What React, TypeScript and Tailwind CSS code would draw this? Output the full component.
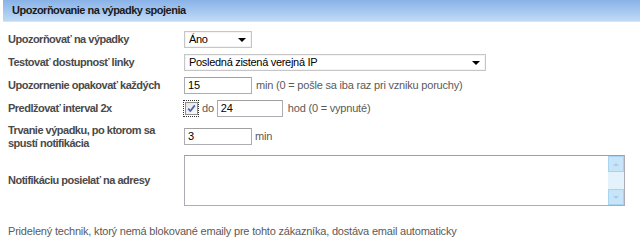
import { ReactNode } from 'react';

function Select({ value, width }: { value: string; width: string }) {
  return (
    <div
      className={`${width} h-[17px] flex items-center justify-between border border-[#c6c6c6] bg-white pl-[4px] pr-[5px] text-[11px] tracking-[-0.3px] text-black shadow-[inset_0_0_0_1px_#f4f4f4]`}
    >
      <span>{value}</span>
      <span className="w-0 h-0 border-l-[4px] border-r-[4px] border-t-[4px] border-l-transparent border-r-transparent border-t-black" />
    </div>
  );
}

function Input({ value, width }: { value: string; width: string }) {
  return (
    <div
      className={`${width} h-[17px] flex items-center border border-[#abadb3] border-t-[#a0a0a0] bg-white px-[3px] text-[11px] text-black`}
    >
      {value}
    </div>
  );
}

function Row({ label, height, children }: { label: ReactNode; height: string; children: ReactNode }) {
  return (
    <div className={`flex items-center ${height}`}>
      <div className="w-[176px] shrink-0 font-bold text-[11px] leading-[13px] tracking-[-0.5px] text-[#4a4a4a]">{label}</div>
      <div className="flex items-center text-[11px] tracking-[-0.2px] text-[#5a5a5a]">{children}</div>
    </div>
  );
}

export default function App() {
  return (
    <div
      className="w-[640px] h-[249px] bg-white overflow-hidden"
      style={{ fontFamily: '"Liberation Sans", Arial, sans-serif' }}
    >
      <div className="ml-[3px] h-[22px] flex items-center pl-[9px] bg-gradient-to-b from-[#88b2e7] to-[#c0daf6] font-bold text-[11px] tracking-[-0.5px] text-[#1a1a1a] border-b border-[#e2e2e2]">
        Upozorňovanie na výpadky spojenia
      </div>

      <div className="pl-[8px] pt-[6px]">
        <Row label="Upozorňovať na výpadky" height="h-[23px]">
          <Select value="Áno" width="w-[68px]" />
        </Row>
        <Row label="Testovať dostupnosť linky" height="h-[23px]">
          <Select value="Posledná zistená verejná IP" width="w-[302px]" />
        </Row>
        <Row label="Upozornenie opakovať každých" height="h-[23px]">
          <Input value="15" width="w-[68px]" />
          <span className="ml-[4px]">min (0 = pošle sa iba raz pri vzniku poruchy)</span>
        </Row>
        <Row label="Predlžovať interval 2x" height="h-[23px]">
          <div className="w-[16px] h-[17px] -ml-[1px] flex items-center justify-center border border-dotted border-[#333]">
            <div className="w-[13px] h-[13px] border border-[#8f8f8f] bg-gradient-to-br from-[#e6e6e6] to-[#fbfbfb] flex items-center justify-center">
              <svg width="9" height="9" viewBox="0 0 9 9">
                <path d="M1.2 4.6 L3.4 7 L7.8 1.4" fill="none" stroke="#4a5fb0" strokeWidth="1.7" />
              </svg>
            </div>
          </div>
          <span className="ml-[3px] mr-[3px]">do</span>
          <Input value="24" width="w-[66px]" />
          <span className="ml-[5px]">hod (0 = vypnuté)</span>
        </Row>
        <Row
          label={
            <>
              Trvanie výpadku, po ktorom sa
              <br />
              spustí notifikácia
            </>
          }
          height="h-[33px]"
        >
          <Input value="3" width="w-[68px]" />
          <span className="ml-[3px]">min</span>
        </Row>
        <Row label="Notifikáciu posielať na adresy" height="h-[55px]">
          <div className="w-[441px] h-[51px] flex border border-[#abadb3] border-t-[#a0a0a0] bg-white">
            <div className="flex-1" />
            <div className="w-[16px] flex flex-col bg-[#e4f2fc]">
              <div className="h-[16px] border border-[#a8d4f2] bg-[#c8e4f8] flex items-center justify-center">
                <span className="w-0 h-0 border-l-[3px] border-r-[3px] border-b-[3px] border-l-transparent border-r-transparent border-b-[#a9cde8]" />
              </div>
              <div className="flex-1" />
              <div className="h-[16px] border border-[#a8d4f2] bg-[#c8e4f8] flex items-center justify-center">
                <span className="w-0 h-0 border-l-[3px] border-r-[3px] border-t-[3px] border-l-transparent border-r-transparent border-t-[#a9cde8]" />
              </div>
            </div>
          </div>
        </Row>
        <div className="mt-[15px] text-[11px] tracking-[-0.2px] text-[#5a5a5a]">
          Pridelený technik, ktorý nemá blokované emaily pre tohto zákazníka, dostáva email automaticky
        </div>
      </div>
    </div>
  );
}
